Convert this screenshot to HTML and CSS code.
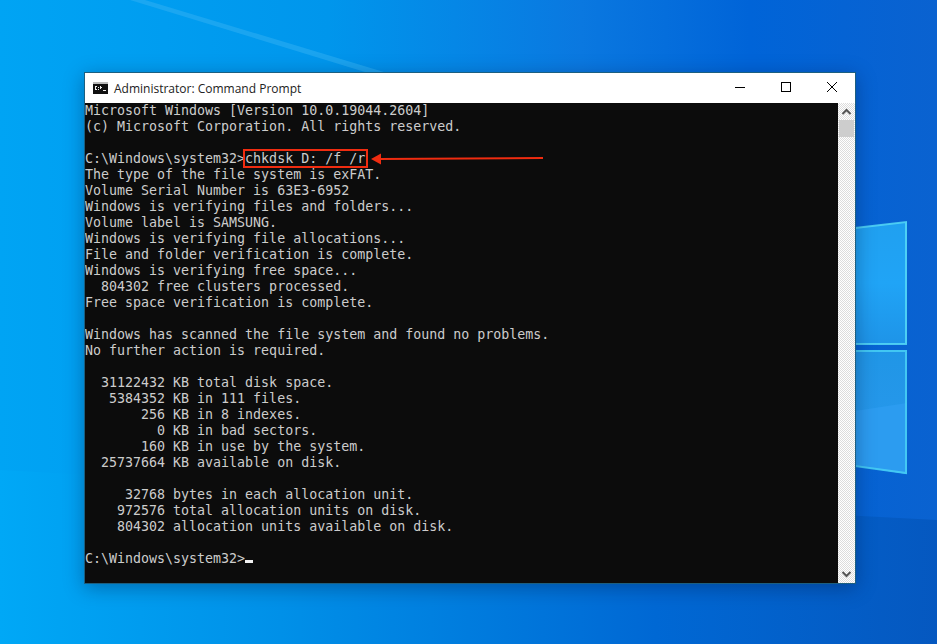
FILE: index.html
```html
<!DOCTYPE html>
<html lang="en">
<head>
<meta charset="utf-8">
<title>Administrator: Command Prompt</title>
<link rel="stylesheet" href="styles.css">
</head>
<body>
<main class="desktop">
  <svg class="wallpaper" viewBox="0 0 937 644" aria-hidden="true">
    <defs>
      <linearGradient id="base" x1="0" y1="0" x2="1" y2="0">
        <stop offset="0" stop-color="#00a4f4"/>
        <stop offset=".35" stop-color="#0096ec"/>
        <stop offset=".62" stop-color="#0a78e0"/>
        <stop offset=".8" stop-color="#0064d8"/>
        <stop offset="1" stop-color="#0a62d0"/>
      </linearGradient>
      <linearGradient id="pane" x1="0" y1="0" x2="0" y2="1">
        <stop offset="0" stop-color="#20a0f0"/>
        <stop offset=".5" stop-color="#20a4f6"/>
        <stop offset="1" stop-color="#1e94e8"/>
      </linearGradient>
      <linearGradient id="pane2" x1="0" y1="0" x2="0" y2="1">
        <stop offset="0" stop-color="#2096e6"/>
        <stop offset="1" stop-color="#2a98ee"/>
      </linearGradient>
      <linearGradient id="floor" x1="0" y1="0" x2="1" y2="0">
        <stop offset="0" stop-color="#00a8f6"/>
        <stop offset=".3" stop-color="#0090e8"/>
        <stop offset=".7" stop-color="#0068d4"/>
        <stop offset="1" stop-color="#0558c0"/>
      </linearGradient>
    </defs>
    <rect width="937" height="644" fill="url(#base)"/>
    <polygon points="0,470 937,520 937,644 0,644" fill="url(#floor)"/>
    <polygon points="130,0 145,0 460,95 440,95" fill="#30aef2" opacity=".55"/>
    <polygon points="855,228 907,222 907,344 855,344" fill="url(#pane)"/>
    <polygon points="855,350 907,350 907,474 855,466" fill="url(#pane2)"/>
    <polygon points="855,411 907,403 907,474 855,466" fill="#2c9cf0"/>
    <polyline points="855,228 906,222 906,344 855,344" fill="none" stroke="#55d8f6" stroke-width="2" opacity=".85"/>
    <polyline points="855,351 906,351 906,473 855,466" fill="none" stroke="#48d0f4" stroke-width="2" opacity=".85"/>
  </svg>

  <section class="window">
    <header class="titlebar">
      <svg class="app-icon" viewBox="0 0 15 12" aria-hidden="true">
        <rect width="15" height="12" fill="#111"/>
        <rect x="0" y="0" width="15" height="2" fill="#bbb"/>
        <path d="M2 4h2v1H3v2h1v1H2zM5 5h1v1H5zM5 7h1v1H5zM7 4h1v1h1v1H8v1H7zM10 8h3v1h-3z" fill="#eee"/>
      </svg>
      <h1 class="title">Administrator: Command Prompt</h1>
      <div class="controls">
        <svg class="control" viewBox="0 0 46 30" aria-hidden="true"><path d="M18 14.500h10" stroke="#000" fill="none"/></svg>
        <svg class="control" viewBox="0 0 46 30" aria-hidden="true"><rect x="18.500" y="9.500" width="9" height="9" stroke="#000" fill="none"/></svg>
        <svg class="control" viewBox="0 0 46 30" aria-hidden="true"><path d="M18 9l10 10M28 9L18 19" stroke="#000" fill="none"/></svg>
      </div>
    </header>
    <div class="body">
<pre class="console">Microsoft Windows [Version 10.0.19044.2604]
(c) Microsoft Corporation. All rights reserved.

C:\Windows\system32&gt;chkdsk D: /f /r
The type of the file system is exFAT.
Volume Serial Number is 63E3-6952
Windows is verifying files and folders...
Volume label is SAMSUNG.
Windows is verifying file allocations...
File and folder verification is complete.
Windows is verifying free space...
  804302 free clusters processed.
Free space verification is complete.

Windows has scanned the file system and found no problems.
No further action is required.

  31122432 KB total disk space.
   5384352 KB in 111 files.
       256 KB in 8 indexes.
         0 KB in bad sectors.
       160 KB in use by the system.
  25737664 KB available on disk.

     32768 bytes in each allocation unit.
    972576 total allocation units on disk.
    804302 allocation units available on disk.

C:\Windows\system32&gt;<span class="cursor"></span></pre>
      <aside class="scrollbar">
        <svg class="arrow" viewBox="0 0 17 17" aria-hidden="true"><path d="M4.500 11l4-4 4 4" stroke="#555" stroke-width="2" fill="none"/></svg>
        <div class="thumb"></div>
        <div class="track"></div>
        <svg class="arrow" viewBox="0 0 17 17" aria-hidden="true"><path d="M4.500 6l4 4 4-4" stroke="#555" stroke-width="2" fill="none"/></svg>
      </aside>
    </div>
  </section>

  <div class="highlight"></div>
  <svg class="pointer" viewBox="0 0 180 14" aria-hidden="true">
    <polygon points="0,7 10,1.500 10,12.500" fill="#f02c10"/>
    <polygon points="8,6 172,5 172,7 8,8" fill="#f02c10"/>
  </svg>
</main>
</body>
</html>
```
FILE: styles.css
```css
html, body {
  margin: 0;
  padding: 0;
  overflow: hidden;
}

.desktop {
  position: relative;
  width: 937px;
  height: 644px;
  overflow: hidden;
}

.wallpaper {
  position: absolute;
  inset: 0;
  width: 937px;
  height: 644px;
  display: block;
}

.window {
  position: absolute;
  left: 84px;
  top: 72px;
  width: 770px;
  display: flex;
  flex-direction: column;
  background: #fff;
  border: 1px solid #1c5f80;
  box-shadow: 0 4px 18px rgba(0, 20, 60, .35);
}

.titlebar {
  display: flex;
  align-items: center;
  height: 30px;
  padding-left: 8px;
  background: #fff;
}

.app-icon {
  width: 15px;
  height: 12px;
  flex: none;
}

.title {
  margin: 0 0 0 6px;
  flex: 1;
  font: 400 12px "Open Sans", "Liberation Sans", sans-serif;
  color: #222;
  white-space: nowrap;
}

.controls {
  display: flex;
}

.control {
  width: 46px;
  height: 30px;
  display: block;
}

.body {
  display: flex;
  height: 480px;
}

.console {
  flex: 1;
  margin: 0;
  padding: 0;
  background: #0c0c0c;
  color: #cccccc;
  font: 13.3px/16px "DejaVu Sans Mono", monospace;
  white-space: pre;
  overflow: hidden;
}

.cursor {
  display: inline-block;
  width: 8px;
  height: 3px;
  background: #f2f2f2;
}

.scrollbar {
  width: 17px;
  flex: none;
  display: flex;
  flex-direction: column;
  background-color: #fff;
  background-image: conic-gradient(#dcdcdc 25%, #fff 0 50%, #dcdcdc 0 75%, #fff 0);
  background-size: 2px 2px;
}

.arrow {
  width: 17px;
  height: 17px;
  display: block;
  flex: none;
}

.thumb {
  height: 17px;
  margin: 0 1px;
  background: #cdcdcd;
  flex: none;
}

.track {
  flex: 1;
}

.highlight {
  position: absolute;
  left: 243px;
  top: 149px;
  width: 121px;
  height: 15px;
  border: 2px solid #f02c10;
}

.pointer {
  position: absolute;
  left: 371px;
  top: 152px;
  width: 180px;
  height: 14px;
  display: block;
}
```
